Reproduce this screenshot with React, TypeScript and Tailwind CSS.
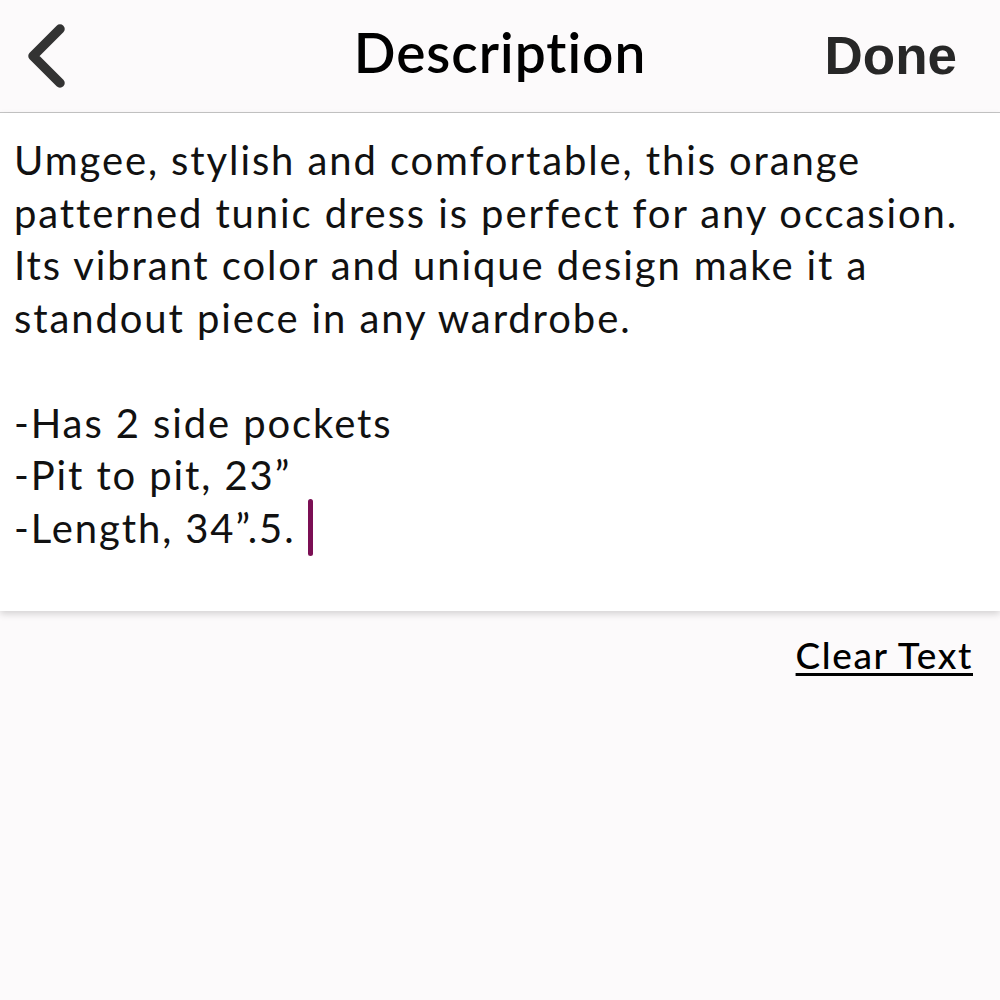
import { useState } from "react";

// lines are broken exactly as in the editor
const body = [
  "Umgee, stylish and comfortable, this orange",
  "patterned tunic dress is perfect for any occasion.",
  "Its vibrant color and unique design make it a",
  "standout piece in any wardrobe.",
  "",
  "-Has 2 side pockets",
  "-Pit to pit, 23”",
  "-Length, 34”.5.",
].join("\n");

export default function App() {
  const [text, setText] = useState(body);

  return (
    <div className="min-h-screen w-[1000px] bg-[#fcfafb] font-['Lato',sans-serif] text-black">
      {/* header */}
      <header className="relative flex h-[113px] items-center border-b border-[#c6c6c6] bg-[#fcfafb]">
        <button className="ml-[20px] flex h-[70px] w-[50px] items-center justify-center">
          <svg width="46" height="70" viewBox="0 0 46 70" fill="none">
            <path
              d="M38 8 L11 35 L38 62"
              stroke="#333333"
              strokeWidth="9.5"
              strokeLinecap="round"
              strokeLinejoin="round"
            />
          </svg>
        </button>
        <h1 className="absolute left-1/2 top-[17px] -translate-x-1/2 text-[55px] font-semibold leading-[70px] tracking-[1px] text-black">
          Description
        </h1>
        <button className="ml-auto mr-[43px] font-['Liberation_Sans',sans-serif] text-[53px] font-bold leading-[70px] text-[#272727]">
          Done
        </button>
      </header>

      {/* text area */}
      <div className="relative h-[498px] bg-white shadow-[0_3px_7px_rgba(0,0,0,0.16)]">
        <div className="whitespace-pre px-[14px] pt-[21px] text-[40px] leading-[52.5px] tracking-[1.9px] text-[#111]">
          {text}
          {/* caret */}
          <span className="relative ml-[12px] inline-block w-[5px]">
            <span className="absolute -top-[44px] left-0 h-[57px] w-[5px] rounded-full bg-[#7b0f54]" />
          </span>
        </div>
      </div>

      {/* clear */}
      <div className="flex justify-end pr-[27px] pt-[20px]">
        <button
          onClick={() => setText("")}
          className="text-[37px] font-medium leading-[48px] tracking-[1.6px] text-black underline decoration-[2.5px] underline-offset-[4px]"
        >
          Clear Text
        </button>
      </div>
    </div>
  );
}
